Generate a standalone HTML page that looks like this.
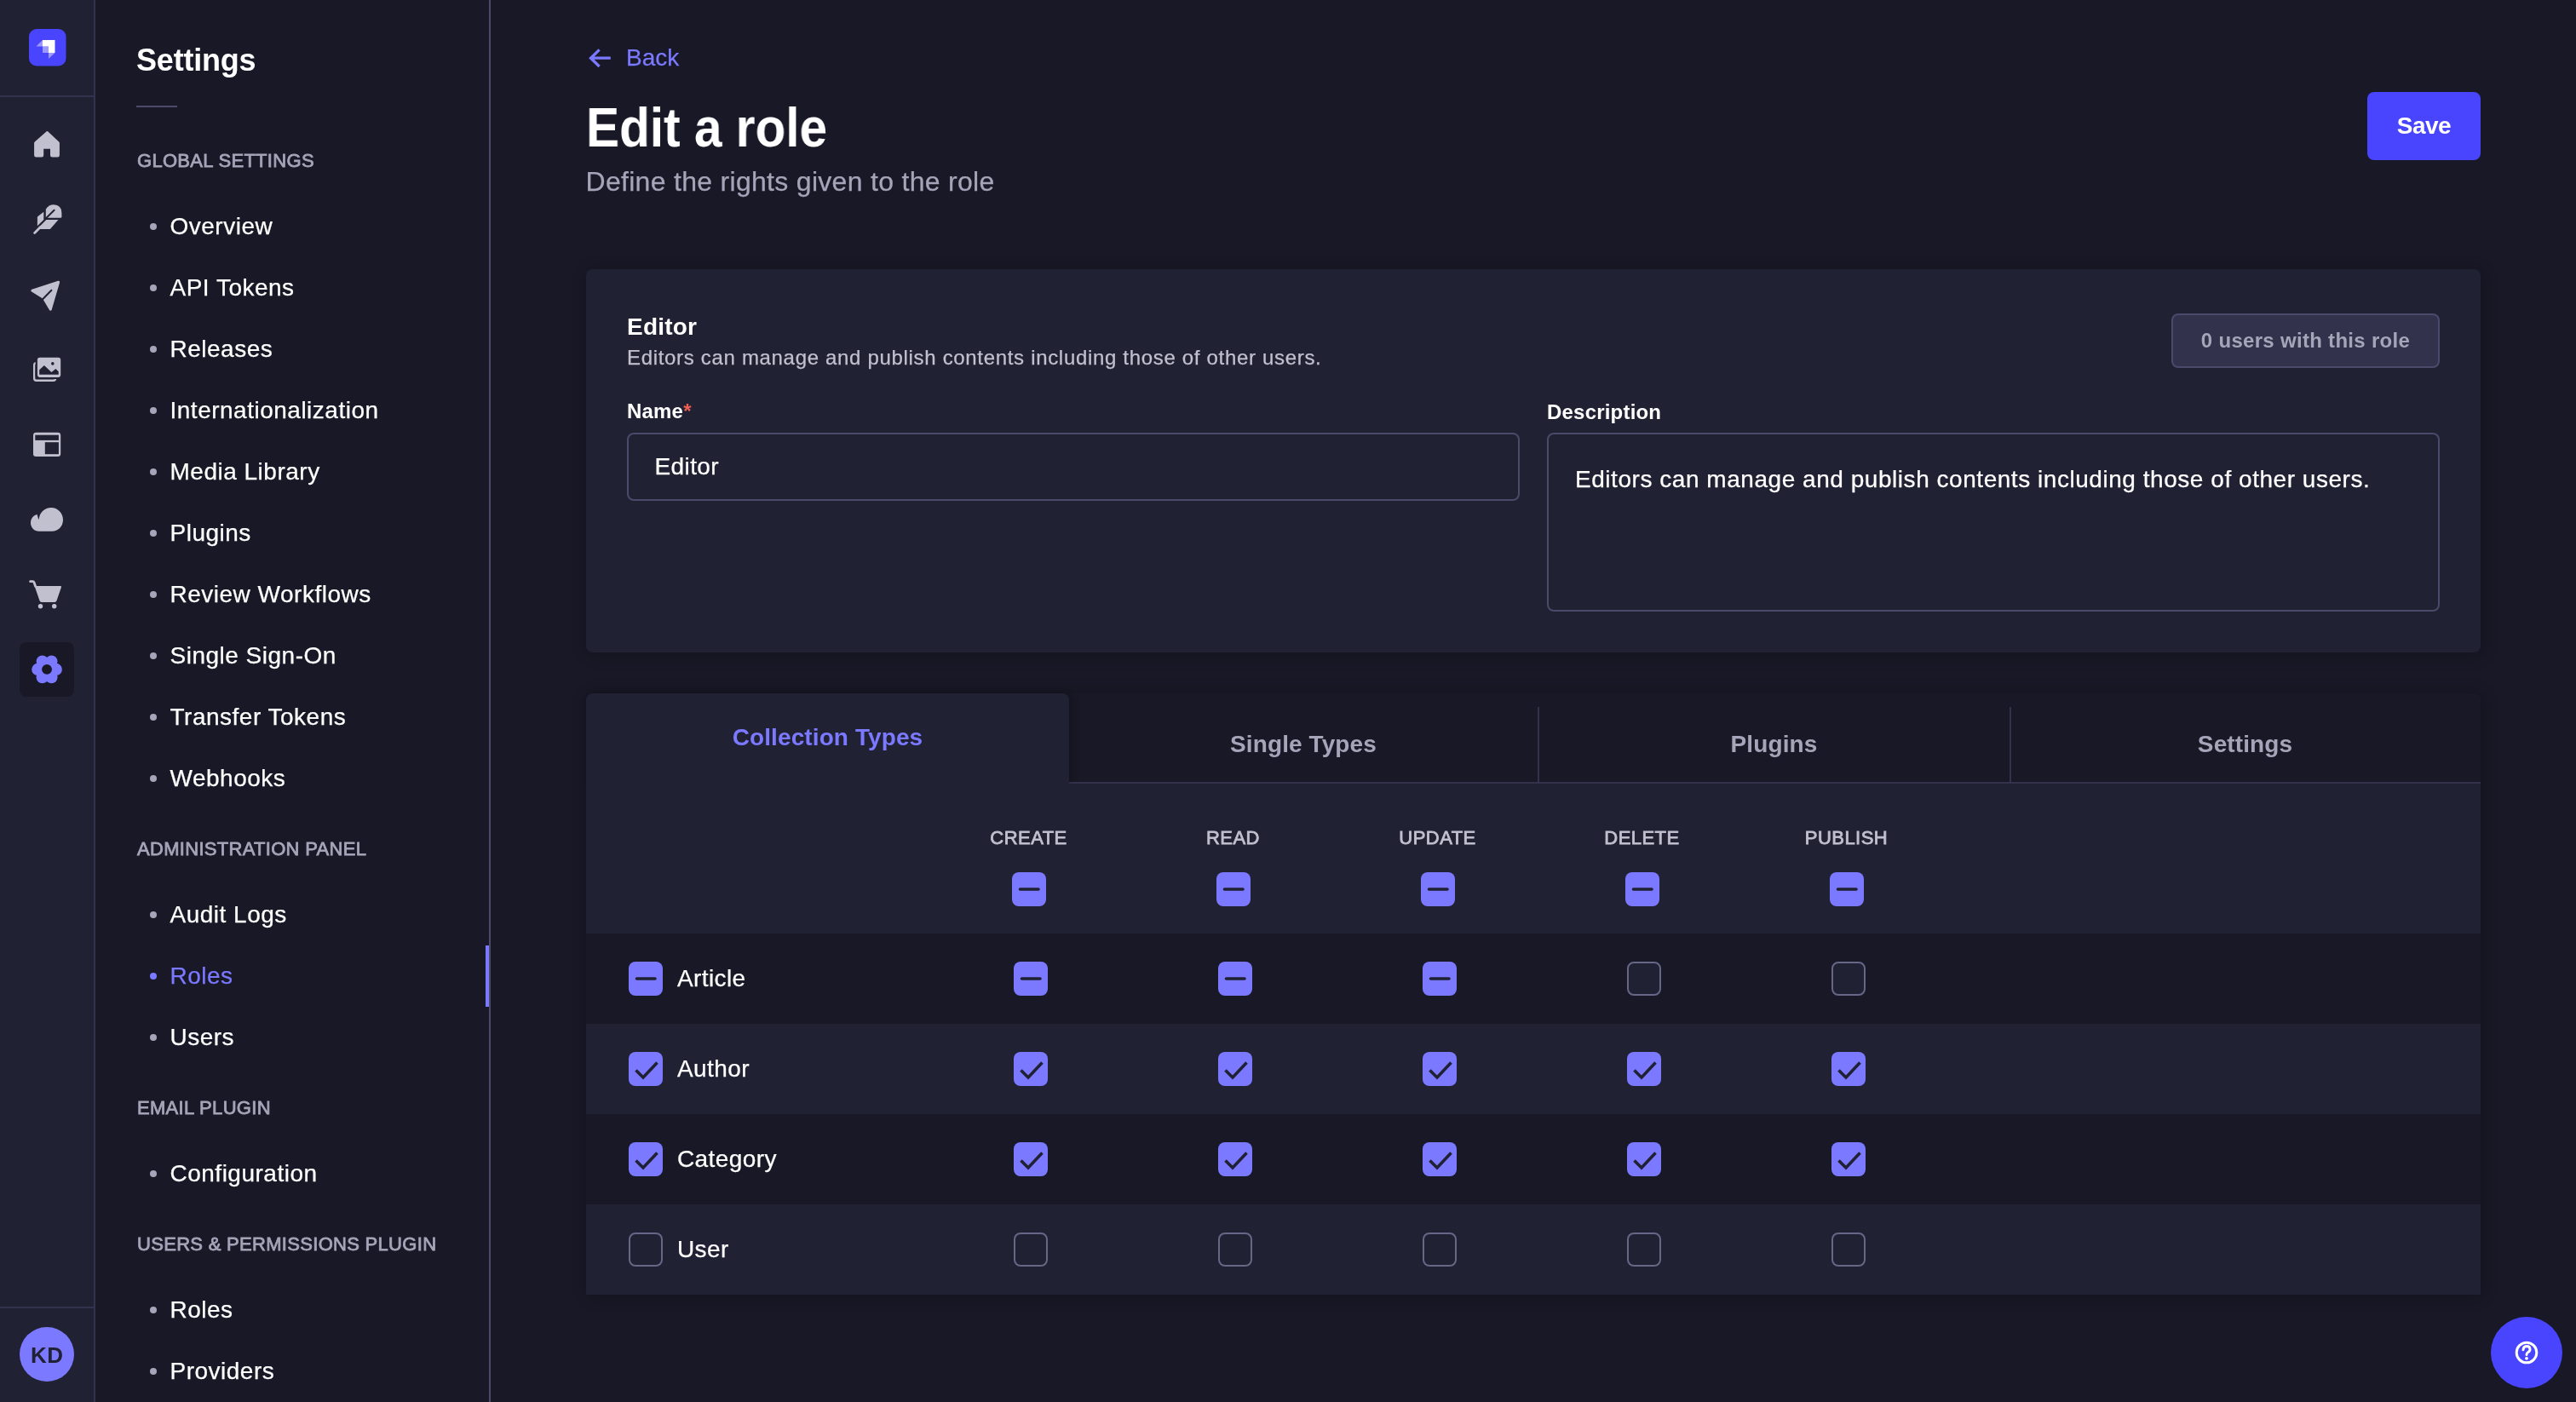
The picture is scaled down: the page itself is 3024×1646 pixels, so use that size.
<!DOCTYPE html>
<html><head><meta charset="utf-8"><title>Edit a role</title>
<style>
html,body{margin:0;padding:0;}
body{width:3024px;height:1646px;overflow:hidden;position:relative;background:#181826;font-family:"Liberation Sans",sans-serif;}
#root{position:absolute;left:0;top:0;width:3024px;height:1646px;will-change:transform;}
#root>div{position:absolute;}
svg{display:block;}
@media (max-width:2000px){body{width:1512px;height:823px;} #root{zoom:0.5;}}
</style></head><body>
<div id="root">
<div style="left:0px;top:0px;width:110px;height:1646px;background:#212134"></div>
<div style="left:110px;top:0px;width:2px;height:1646px;background:#32324d"></div>
<div style="left:0px;top:112px;width:110px;height:2px;background:#32324d"></div>
<div style="left:0px;top:1534px;width:110px;height:2px;background:#32324d"></div>
<svg style="position:absolute;left:34px;top:34px;" width="44" height="44" viewBox="0 0 44 44"><rect x="0" y="0" width="43.5" height="43.5" rx="9" fill="#4945ff"/><path d="M16 13 H30.5 V28 H23 V20.5 H16 Z" fill="#fff"/><path d="M16 20.5 H23 V28 H16 Z" fill="#fff" fill-opacity="0.45"/><path d="M8.4 20.5 L16 13 V20.5 Z" fill="#fff" fill-opacity="0.45"/><path d="M23 28 H30.5 L23 35 Z" fill="#fff" fill-opacity="0.45"/></svg>
<svg style="position:absolute;left:33px;top:148px;" width="44" height="44" viewBox="0 0 44 44"><path d="M22.4 6.2 Q22.9 5.9 23.4 6.4 L36.2 18.4 Q36.9 19.1 36.9 20 V34.3 Q36.9 36.6 34.6 36.6 H28.3 Q26 36.6 26 34.3 V26.7 H18.2 V34.3 Q18.2 36.6 15.9 36.6 H9.4 Q7.1 36.6 7.1 34.3 V20 Q7.1 19.1 7.8 18.4 L21.4 6.4 Q21.9 5.9 22.4 6.2 Z" fill="#c0c0cf"/></svg>
<svg style="position:absolute;left:34px;top:236px;" width="44" height="44" viewBox="0 0 44 44"><path d="M19.8 19.8 V9.6 Q23.5 4.2 29 4.2 Q38.4 4.6 38.4 14 V18.3 Q38.4 19.8 36.9 19.8 Z" fill="#c0c0cf"/><path d="M17.3 12.7 V21.9 L9.9 29.2 V19.2 Q9.9 18.5 10.5 18 Z" fill="#c0c0cf"/><path d="M20.3 22 H34.5 L25.3 32.4 Q24.8 33 24 33 H12.6 L11.4 31 Z" fill="#c0c0cf"/><path d="M6.6 37.4 L13.5 30.5" stroke="#c0c0cf" stroke-width="2.8" stroke-linecap="round"/><path d="M29.6 10.7 L19.2 21.1" stroke="#212134" stroke-width="2" stroke-linecap="round"/><path d="M19.8 19.8 H20.5 V22 H19.8 Z" fill="#212134"/></svg>
<svg style="position:absolute;left:32px;top:325px;" width="44" height="44" viewBox="0 0 44 44"><path d="M36.6 6.3 L5.9 16.2 L18 23.6 L20 26 L27.3 38.2 Z" fill="#c0c0cf" stroke="#c0c0cf" stroke-width="3" stroke-linejoin="round"/><path d="M18.4 26 L28.4 15.8" stroke="#212134" stroke-width="2" stroke-linecap="round"/></svg>
<svg style="position:absolute;left:34px;top:412px;" width="44" height="44" viewBox="0 0 44 44"><rect x="6.15" y="14.15" width="25" height="20.6" rx="2.5" fill="none" stroke="#c0c0cf" stroke-width="2.3"/><rect x="7.7" y="5.6" width="31.7" height="27.5" rx="4" fill="#212134"/><rect x="9.9" y="7.8" width="27.3" height="23.1" rx="2.8" fill="#c0c0cf"/><path d="M12.2 22.3 L17.9 17.1 L26.4 25.1 L31.4 21 L34.7 24.2 V27.8 H12.2 Z" fill="#212134"/><circle cx="27.8" cy="14.9" r="1.8" fill="#212134"/></svg>
<svg style="position:absolute;left:34px;top:500px;" width="44" height="44" viewBox="0 0 44 44"><rect x="5" y="7.8" width="32.2" height="28.1" rx="3.2" fill="#c0c0cf"/><rect x="7.3" y="10.7" width="27.6" height="6.2" fill="#212134"/><rect x="18.8" y="19.2" width="16.1" height="14" fill="#212134"/></svg>
<svg style="position:absolute;left:33px;top:588px;" width="44" height="44" viewBox="0 0 44 44"><path d="M10.6 15.9 C6 17 3 21 3 26 C3 31.5 7.5 35.8 12.5 35.8 H28 C35.2 35.8 41 30 41 22.2 C41 14.4 34.8 8 27 8 C20.5 8 15 12.5 13.3 18.5 L12.3 22.3 Z" fill="#c0c0cf"/></svg>
<svg style="position:absolute;left:32px;top:676px;" width="44" height="44" viewBox="0 0 44 44"><path d="M3.6 6.7 H6.3 Q7.6 6.7 8.1 8 L9.6 12.2" fill="none" stroke="#c0c0cf" stroke-width="2.8" stroke-linecap="round" stroke-linejoin="round"/><path d="M8.6 11.9 H39 Q40.3 11.9 40 13.2 L34.6 29 Q34 30.9 32 30.9 H17 Q15 30.9 14.4 29 Z" fill="#c0c0cf"/><circle cx="15.5" cy="35.8" r="2.7" fill="#c0c0cf"/><circle cx="31.7" cy="35.8" r="2.7" fill="#c0c0cf"/></svg>
<div style="left:23px;top:754px;width:64px;height:64px;background:#181826;border-radius:8px"></div>
<svg style="position:absolute;left:33px;top:764px;" width="44" height="44" viewBox="0 0 44 44"><circle cx="32.85" cy="21.90" r="7.05" fill="#7b79ff"/><circle cx="27.45" cy="31.25" r="7.05" fill="#7b79ff"/><circle cx="16.65" cy="31.25" r="7.05" fill="#7b79ff"/><circle cx="11.25" cy="21.90" r="7.05" fill="#7b79ff"/><circle cx="16.65" cy="12.55" r="7.05" fill="#7b79ff"/><circle cx="27.45" cy="12.55" r="7.05" fill="#7b79ff"/><circle cx="22.05" cy="21.9" r="11" fill="#7b79ff"/><circle cx="22.05" cy="21.85" r="5.95" fill="#181826"/></svg>
<div style="left:23px;top:1558px;width:64px;height:64px;background:#7b79ff;border-radius:50%"></div>
<div style="top:1577.99px;font-size:26px;line-height:26px;font-weight:700;color:#212134;letter-spacing:0.5px;left:23.30px;width:64px;text-align:center;white-space:nowrap;">KD</div>
<div style="left:112px;top:0px;width:462px;height:1646px;background:#181826"></div>
<div style="left:574px;top:0px;width:2px;height:1646px;background:#4a4a6a"></div>
<div style="top:52.53px;font-size:36px;line-height:36px;font-weight:700;color:#ffffff;letter-spacing:-0.2px;left:160px;white-space:nowrap;">Settings</div>
<div style="left:160px;top:124px;width:48px;height:2px;background:#4a4a6a"></div>
<div style="top:178.38px;font-size:22px;line-height:22px;font-weight:400;color:#a5a5ba;letter-spacing:0.3px;left:161px;white-space:nowrap;-webkit-text-stroke:0.8px #a5a5ba;">GLOBAL SETTINGS</div>
<div style="left:176px;top:262px;width:8px;height:8px;background:#a5a5ba;border-radius:50%"></div>
<div style="top:252.30px;font-size:28px;line-height:28px;font-weight:400;color:#ffffff;letter-spacing:0.5px;left:199.5px;white-space:nowrap;-webkit-text-stroke:0.25px #ffffff;">Overview</div>
<div style="left:176px;top:334px;width:8px;height:8px;background:#a5a5ba;border-radius:50%"></div>
<div style="top:324.30px;font-size:28px;line-height:28px;font-weight:400;color:#ffffff;letter-spacing:0.5px;left:199.5px;white-space:nowrap;-webkit-text-stroke:0.25px #ffffff;">API Tokens</div>
<div style="left:176px;top:406px;width:8px;height:8px;background:#a5a5ba;border-radius:50%"></div>
<div style="top:396.30px;font-size:28px;line-height:28px;font-weight:400;color:#ffffff;letter-spacing:0.5px;left:199.5px;white-space:nowrap;-webkit-text-stroke:0.25px #ffffff;">Releases</div>
<div style="left:176px;top:478px;width:8px;height:8px;background:#a5a5ba;border-radius:50%"></div>
<div style="top:468.30px;font-size:28px;line-height:28px;font-weight:400;color:#ffffff;letter-spacing:0.5px;left:199.5px;white-space:nowrap;-webkit-text-stroke:0.25px #ffffff;">Internationalization</div>
<div style="left:176px;top:550px;width:8px;height:8px;background:#a5a5ba;border-radius:50%"></div>
<div style="top:540.30px;font-size:28px;line-height:28px;font-weight:400;color:#ffffff;letter-spacing:0.5px;left:199.5px;white-space:nowrap;-webkit-text-stroke:0.25px #ffffff;">Media Library</div>
<div style="left:176px;top:622px;width:8px;height:8px;background:#a5a5ba;border-radius:50%"></div>
<div style="top:612.30px;font-size:28px;line-height:28px;font-weight:400;color:#ffffff;letter-spacing:0.5px;left:199.5px;white-space:nowrap;-webkit-text-stroke:0.25px #ffffff;">Plugins</div>
<div style="left:176px;top:694px;width:8px;height:8px;background:#a5a5ba;border-radius:50%"></div>
<div style="top:684.30px;font-size:28px;line-height:28px;font-weight:400;color:#ffffff;letter-spacing:0.5px;left:199.5px;white-space:nowrap;-webkit-text-stroke:0.25px #ffffff;">Review Workflows</div>
<div style="left:176px;top:766px;width:8px;height:8px;background:#a5a5ba;border-radius:50%"></div>
<div style="top:756.30px;font-size:28px;line-height:28px;font-weight:400;color:#ffffff;letter-spacing:0.5px;left:199.5px;white-space:nowrap;-webkit-text-stroke:0.25px #ffffff;">Single Sign-On</div>
<div style="left:176px;top:838px;width:8px;height:8px;background:#a5a5ba;border-radius:50%"></div>
<div style="top:828.30px;font-size:28px;line-height:28px;font-weight:400;color:#ffffff;letter-spacing:0.5px;left:199.5px;white-space:nowrap;-webkit-text-stroke:0.25px #ffffff;">Transfer Tokens</div>
<div style="left:176px;top:910px;width:8px;height:8px;background:#a5a5ba;border-radius:50%"></div>
<div style="top:900.30px;font-size:28px;line-height:28px;font-weight:400;color:#ffffff;letter-spacing:0.5px;left:199.5px;white-space:nowrap;-webkit-text-stroke:0.25px #ffffff;">Webhooks</div>
<div style="top:986.38px;font-size:22px;line-height:22px;font-weight:400;color:#a5a5ba;letter-spacing:0.3px;left:161px;white-space:nowrap;-webkit-text-stroke:0.8px #a5a5ba;">ADMINISTRATION PANEL</div>
<div style="left:176px;top:1070px;width:8px;height:8px;background:#a5a5ba;border-radius:50%"></div>
<div style="top:1060.30px;font-size:28px;line-height:28px;font-weight:400;color:#ffffff;letter-spacing:0.5px;left:199.5px;white-space:nowrap;-webkit-text-stroke:0.25px #ffffff;">Audit Logs</div>
<div style="left:176px;top:1142px;width:8px;height:8px;background:#7b79ff;border-radius:50%"></div>
<div style="top:1132.30px;font-size:28px;line-height:28px;font-weight:400;color:#7b79ff;letter-spacing:0.5px;left:199.5px;white-space:nowrap;-webkit-text-stroke:0.25px #7b79ff;">Roles</div>
<div style="left:570px;top:1110px;width:4px;height:72px;background:#7b79ff"></div>
<div style="left:176px;top:1214px;width:8px;height:8px;background:#a5a5ba;border-radius:50%"></div>
<div style="top:1204.30px;font-size:28px;line-height:28px;font-weight:400;color:#ffffff;letter-spacing:0.5px;left:199.5px;white-space:nowrap;-webkit-text-stroke:0.25px #ffffff;">Users</div>
<div style="top:1290.38px;font-size:22px;line-height:22px;font-weight:400;color:#a5a5ba;letter-spacing:0.3px;left:161px;white-space:nowrap;-webkit-text-stroke:0.8px #a5a5ba;">EMAIL PLUGIN</div>
<div style="left:176px;top:1374px;width:8px;height:8px;background:#a5a5ba;border-radius:50%"></div>
<div style="top:1364.30px;font-size:28px;line-height:28px;font-weight:400;color:#ffffff;letter-spacing:0.5px;left:199.5px;white-space:nowrap;-webkit-text-stroke:0.25px #ffffff;">Configuration</div>
<div style="top:1450.38px;font-size:22px;line-height:22px;font-weight:400;color:#a5a5ba;letter-spacing:0.3px;left:161px;white-space:nowrap;-webkit-text-stroke:0.8px #a5a5ba;">USERS &amp; PERMISSIONS PLUGIN</div>
<div style="left:176px;top:1534px;width:8px;height:8px;background:#a5a5ba;border-radius:50%"></div>
<div style="top:1524.30px;font-size:28px;line-height:28px;font-weight:400;color:#ffffff;letter-spacing:0.5px;left:199.5px;white-space:nowrap;-webkit-text-stroke:0.25px #ffffff;">Roles</div>
<div style="left:176px;top:1606px;width:8px;height:8px;background:#a5a5ba;border-radius:50%"></div>
<div style="top:1596.30px;font-size:28px;line-height:28px;font-weight:400;color:#ffffff;letter-spacing:0.5px;left:199.5px;white-space:nowrap;-webkit-text-stroke:0.25px #ffffff;">Providers</div>
<svg style="position:absolute;left:689px;top:56px;" width="30" height="24" viewBox="0 0 30 24"><path d="M27.8 12.2 H5 M14.6 2.4 L4.5 12.2 L14.6 22" fill="none" stroke="#7b79ff" stroke-width="3.3" stroke-linecap="butt" stroke-linejoin="miter"/></svg>
<div style="top:54.30px;font-size:28px;line-height:28px;font-weight:400;color:#7b79ff;left:735px;white-space:nowrap;-webkit-text-stroke:0.25px #7b79ff;">Back</div>
<div style="top:118.32px;font-size:64px;line-height:64px;font-weight:700;color:#ffffff;left:688px;white-space:nowrap;transform:scaleX(0.915);transform-origin:0 0;">Edit a role</div>
<div style="top:196.91px;font-size:32px;line-height:32px;font-weight:400;color:#a5a5ba;letter-spacing:0.3px;left:687.5px;white-space:nowrap;-webkit-text-stroke:0.25px #a5a5ba;">Define the rights given to the role</div>
<div style="left:2779px;top:108px;width:133px;height:80px;background:#4945ff;border-radius:8px"></div>
<div style="top:134.30px;font-size:28px;line-height:28px;font-weight:700;color:#ffffff;letter-spacing:-0.5px;left:2779.00px;width:133px;text-align:center;white-space:nowrap;">Save</div>
<div style="left:688px;top:316px;width:2224px;height:450px;background:#212134;border-radius:8px;box-shadow:2px 2px 20px rgba(0,0,0,0.2);"></div>
<div style="top:370.30px;font-size:28px;line-height:28px;font-weight:700;color:#ffffff;letter-spacing:0.2px;left:736px;white-space:nowrap;">Editor</div>
<div style="top:407.68px;font-size:24px;line-height:24px;font-weight:400;color:#c0c0cf;letter-spacing:0.68px;left:736px;white-space:nowrap;-webkit-text-stroke:0.25px #c0c0cf;">Editors can manage and publish contents including those of other users.</div>
<div style="left:2549px;top:368px;width:315px;height:64px;background:#32324d;border:2px solid #4a4a6a;border-radius:8px;box-sizing:border-box"></div>
<div style="top:387.68px;font-size:24px;line-height:24px;font-weight:700;color:#a5a5ba;letter-spacing:0.3px;left:2549.00px;width:315px;text-align:center;white-space:nowrap;">0 users with this role</div>
<div style="top:470.68px;font-size:24px;line-height:24px;font-weight:700;color:#ffffff;letter-spacing:0.2px;left:736px;white-space:nowrap;">Name<span style="color:#ee5e52">*</span></div>
<div style="left:736px;top:508px;width:1048px;height:80px;border:2px solid #4a4a6a;border-radius:8px;box-sizing:border-box;background:#212134"></div>
<div style="top:534.30px;font-size:28px;line-height:28px;font-weight:400;color:#ffffff;letter-spacing:0.4px;left:768.5px;white-space:nowrap;-webkit-text-stroke:0.25px #ffffff;">Editor</div>
<div style="top:471.68px;font-size:24px;line-height:24px;font-weight:700;color:#ffffff;letter-spacing:0.2px;left:1816px;white-space:nowrap;">Description</div>
<div style="left:1816px;top:508px;width:1048px;height:210px;border:2px solid #4a4a6a;border-radius:8px;box-sizing:border-box;background:#212134"></div>
<div style="top:549.30px;font-size:28px;line-height:28px;font-weight:400;color:#ffffff;letter-spacing:0.54px;left:1849px;white-space:nowrap;-webkit-text-stroke:0.25px #ffffff;">Editors can manage and publish contents including those of other users.</div>
<div style="left:688px;top:814px;width:2224px;height:706px;background:#212134;border-radius:8px;box-shadow:2px 2px 20px rgba(0,0,0,0.2);"></div>
<div style="left:688px;top:814px;width:2224px;height:106px;background:#181826;border-radius:8px 8px 0 0"></div>
<div style="left:1255px;top:918px;width:1657px;height:2px;background:#32324d"></div>
<div style="left:1805px;top:830px;width:2px;height:88px;background:#32324d"></div>
<div style="left:2359px;top:830px;width:2px;height:88px;background:#32324d"></div>
<div style="left:688px;top:814px;width:567px;height:106px;background:#212134;border-radius:8px 8px 0 0;box-shadow:2px 0 10px rgba(0,0,0,0.25)"></div>
<div style="left:688px;top:860px;width:567px;height:60px;background:#212134"></div>
<div style="left:688px;top:920px;width:2224px;height:30px;background:#212134"></div>
<div style="top:852.30px;font-size:28px;line-height:28px;font-weight:700;color:#7b79ff;letter-spacing:0.1px;left:688.50px;width:566px;text-align:center;white-space:nowrap;">Collection Types</div>
<div style="top:860.30px;font-size:28px;line-height:28px;font-weight:700;color:#a5a5ba;letter-spacing:0.1px;left:1254.00px;width:552px;text-align:center;white-space:nowrap;">Single Types</div>
<div style="top:860.30px;font-size:28px;line-height:28px;font-weight:700;color:#a5a5ba;letter-spacing:0.1px;left:1806.50px;width:552px;text-align:center;white-space:nowrap;">Plugins</div>
<div style="top:860.30px;font-size:28px;line-height:28px;font-weight:700;color:#a5a5ba;letter-spacing:0.1px;left:2359.50px;width:552px;text-align:center;white-space:nowrap;">Settings</div>
<div style="top:973.38px;font-size:22px;line-height:22px;font-weight:400;color:#c0c0cf;letter-spacing:0.45px;left:1107.50px;width:200px;text-align:center;white-space:nowrap;-webkit-text-stroke:0.8px #c0c0cf;">CREATE</div>
<div style="top:973.38px;font-size:22px;line-height:22px;font-weight:400;color:#c0c0cf;letter-spacing:0.45px;left:1347.50px;width:200px;text-align:center;white-space:nowrap;-webkit-text-stroke:0.8px #c0c0cf;">READ</div>
<div style="top:973.38px;font-size:22px;line-height:22px;font-weight:400;color:#c0c0cf;letter-spacing:0.45px;left:1587.50px;width:200px;text-align:center;white-space:nowrap;-webkit-text-stroke:0.8px #c0c0cf;">UPDATE</div>
<div style="top:973.38px;font-size:22px;line-height:22px;font-weight:400;color:#c0c0cf;letter-spacing:0.45px;left:1827.50px;width:200px;text-align:center;white-space:nowrap;-webkit-text-stroke:0.8px #c0c0cf;">DELETE</div>
<div style="top:973.38px;font-size:22px;line-height:22px;font-weight:400;color:#c0c0cf;letter-spacing:0.45px;left:2067.50px;width:200px;text-align:center;white-space:nowrap;-webkit-text-stroke:0.8px #c0c0cf;">PUBLISH</div>
<svg style="position:absolute;left:1187.5px;top:1024px;" width="40" height="40" viewBox="0 0 40 40"><rect x="0" y="0" width="40" height="40" rx="8" fill="#7b79ff"/><path d="M9.5 20 H31" fill="none" stroke="#212134" stroke-width="3.6" stroke-linecap="round"/></svg>
<svg style="position:absolute;left:1427.5px;top:1024px;" width="40" height="40" viewBox="0 0 40 40"><rect x="0" y="0" width="40" height="40" rx="8" fill="#7b79ff"/><path d="M9.5 20 H31" fill="none" stroke="#212134" stroke-width="3.6" stroke-linecap="round"/></svg>
<svg style="position:absolute;left:1667.5px;top:1024px;" width="40" height="40" viewBox="0 0 40 40"><rect x="0" y="0" width="40" height="40" rx="8" fill="#7b79ff"/><path d="M9.5 20 H31" fill="none" stroke="#212134" stroke-width="3.6" stroke-linecap="round"/></svg>
<svg style="position:absolute;left:1907.5px;top:1024px;" width="40" height="40" viewBox="0 0 40 40"><rect x="0" y="0" width="40" height="40" rx="8" fill="#7b79ff"/><path d="M9.5 20 H31" fill="none" stroke="#212134" stroke-width="3.6" stroke-linecap="round"/></svg>
<svg style="position:absolute;left:2147.5px;top:1024px;" width="40" height="40" viewBox="0 0 40 40"><rect x="0" y="0" width="40" height="40" rx="8" fill="#7b79ff"/><path d="M9.5 20 H31" fill="none" stroke="#212134" stroke-width="3.6" stroke-linecap="round"/></svg>
<div style="left:688px;top:1096px;width:2224px;height:106px;background:#181826"></div>
<svg style="position:absolute;left:738px;top:1129px;" width="40" height="40" viewBox="0 0 40 40"><rect x="0" y="0" width="40" height="40" rx="8" fill="#7b79ff"/><path d="M9.5 20 H31" fill="none" stroke="#212134" stroke-width="3.6" stroke-linecap="round"/></svg>
<div style="top:1135.30px;font-size:28px;line-height:28px;font-weight:400;color:#ffffff;letter-spacing:0.4px;left:795px;white-space:nowrap;-webkit-text-stroke:0.25px #ffffff;">Article</div>
<svg style="position:absolute;left:1189.5px;top:1129px;" width="40" height="40" viewBox="0 0 40 40"><rect x="0" y="0" width="40" height="40" rx="8" fill="#7b79ff"/><path d="M9.5 20 H31" fill="none" stroke="#212134" stroke-width="3.6" stroke-linecap="round"/></svg>
<svg style="position:absolute;left:1429.5px;top:1129px;" width="40" height="40" viewBox="0 0 40 40"><rect x="0" y="0" width="40" height="40" rx="8" fill="#7b79ff"/><path d="M9.5 20 H31" fill="none" stroke="#212134" stroke-width="3.6" stroke-linecap="round"/></svg>
<svg style="position:absolute;left:1669.5px;top:1129px;" width="40" height="40" viewBox="0 0 40 40"><rect x="0" y="0" width="40" height="40" rx="8" fill="#7b79ff"/><path d="M9.5 20 H31" fill="none" stroke="#212134" stroke-width="3.6" stroke-linecap="round"/></svg>
<svg style="position:absolute;left:1909.5px;top:1129px;" width="40" height="40" viewBox="0 0 40 40"><rect x="1" y="1" width="38" height="38" rx="7" fill="#212134" stroke="#666687" stroke-width="2"/></svg>
<svg style="position:absolute;left:2149.5px;top:1129px;" width="40" height="40" viewBox="0 0 40 40"><rect x="1" y="1" width="38" height="38" rx="7" fill="#212134" stroke="#666687" stroke-width="2"/></svg>
<div style="left:688px;top:1202px;width:2224px;height:106px;background:#212134"></div>
<svg style="position:absolute;left:738px;top:1235px;" width="40" height="40" viewBox="0 0 40 40"><rect x="0" y="0" width="40" height="40" rx="8" fill="#7b79ff"/><path d="M8.5 21.5 L17 30 L33.5 12.5" fill="none" stroke="#212134" stroke-width="3.6"/></svg>
<div style="top:1241.30px;font-size:28px;line-height:28px;font-weight:400;color:#ffffff;letter-spacing:0.4px;left:795px;white-space:nowrap;-webkit-text-stroke:0.25px #ffffff;">Author</div>
<svg style="position:absolute;left:1189.5px;top:1235px;" width="40" height="40" viewBox="0 0 40 40"><rect x="0" y="0" width="40" height="40" rx="8" fill="#7b79ff"/><path d="M8.5 21.5 L17 30 L33.5 12.5" fill="none" stroke="#212134" stroke-width="3.6"/></svg>
<svg style="position:absolute;left:1429.5px;top:1235px;" width="40" height="40" viewBox="0 0 40 40"><rect x="0" y="0" width="40" height="40" rx="8" fill="#7b79ff"/><path d="M8.5 21.5 L17 30 L33.5 12.5" fill="none" stroke="#212134" stroke-width="3.6"/></svg>
<svg style="position:absolute;left:1669.5px;top:1235px;" width="40" height="40" viewBox="0 0 40 40"><rect x="0" y="0" width="40" height="40" rx="8" fill="#7b79ff"/><path d="M8.5 21.5 L17 30 L33.5 12.5" fill="none" stroke="#212134" stroke-width="3.6"/></svg>
<svg style="position:absolute;left:1909.5px;top:1235px;" width="40" height="40" viewBox="0 0 40 40"><rect x="0" y="0" width="40" height="40" rx="8" fill="#7b79ff"/><path d="M8.5 21.5 L17 30 L33.5 12.5" fill="none" stroke="#212134" stroke-width="3.6"/></svg>
<svg style="position:absolute;left:2149.5px;top:1235px;" width="40" height="40" viewBox="0 0 40 40"><rect x="0" y="0" width="40" height="40" rx="8" fill="#7b79ff"/><path d="M8.5 21.5 L17 30 L33.5 12.5" fill="none" stroke="#212134" stroke-width="3.6"/></svg>
<div style="left:688px;top:1308px;width:2224px;height:106px;background:#181826"></div>
<svg style="position:absolute;left:738px;top:1341px;" width="40" height="40" viewBox="0 0 40 40"><rect x="0" y="0" width="40" height="40" rx="8" fill="#7b79ff"/><path d="M8.5 21.5 L17 30 L33.5 12.5" fill="none" stroke="#212134" stroke-width="3.6"/></svg>
<div style="top:1347.30px;font-size:28px;line-height:28px;font-weight:400;color:#ffffff;letter-spacing:0.4px;left:795px;white-space:nowrap;-webkit-text-stroke:0.25px #ffffff;">Category</div>
<svg style="position:absolute;left:1189.5px;top:1341px;" width="40" height="40" viewBox="0 0 40 40"><rect x="0" y="0" width="40" height="40" rx="8" fill="#7b79ff"/><path d="M8.5 21.5 L17 30 L33.5 12.5" fill="none" stroke="#212134" stroke-width="3.6"/></svg>
<svg style="position:absolute;left:1429.5px;top:1341px;" width="40" height="40" viewBox="0 0 40 40"><rect x="0" y="0" width="40" height="40" rx="8" fill="#7b79ff"/><path d="M8.5 21.5 L17 30 L33.5 12.5" fill="none" stroke="#212134" stroke-width="3.6"/></svg>
<svg style="position:absolute;left:1669.5px;top:1341px;" width="40" height="40" viewBox="0 0 40 40"><rect x="0" y="0" width="40" height="40" rx="8" fill="#7b79ff"/><path d="M8.5 21.5 L17 30 L33.5 12.5" fill="none" stroke="#212134" stroke-width="3.6"/></svg>
<svg style="position:absolute;left:1909.5px;top:1341px;" width="40" height="40" viewBox="0 0 40 40"><rect x="0" y="0" width="40" height="40" rx="8" fill="#7b79ff"/><path d="M8.5 21.5 L17 30 L33.5 12.5" fill="none" stroke="#212134" stroke-width="3.6"/></svg>
<svg style="position:absolute;left:2149.5px;top:1341px;" width="40" height="40" viewBox="0 0 40 40"><rect x="0" y="0" width="40" height="40" rx="8" fill="#7b79ff"/><path d="M8.5 21.5 L17 30 L33.5 12.5" fill="none" stroke="#212134" stroke-width="3.6"/></svg>
<div style="left:688px;top:1414px;width:2224px;height:106px;background:#212134"></div>
<svg style="position:absolute;left:738px;top:1447px;" width="40" height="40" viewBox="0 0 40 40"><rect x="1" y="1" width="38" height="38" rx="7" fill="#212134" stroke="#666687" stroke-width="2"/></svg>
<div style="top:1453.30px;font-size:28px;line-height:28px;font-weight:400;color:#ffffff;letter-spacing:0.4px;left:795px;white-space:nowrap;-webkit-text-stroke:0.25px #ffffff;">User</div>
<svg style="position:absolute;left:1189.5px;top:1447px;" width="40" height="40" viewBox="0 0 40 40"><rect x="1" y="1" width="38" height="38" rx="7" fill="#212134" stroke="#666687" stroke-width="2"/></svg>
<svg style="position:absolute;left:1429.5px;top:1447px;" width="40" height="40" viewBox="0 0 40 40"><rect x="1" y="1" width="38" height="38" rx="7" fill="#212134" stroke="#666687" stroke-width="2"/></svg>
<svg style="position:absolute;left:1669.5px;top:1447px;" width="40" height="40" viewBox="0 0 40 40"><rect x="1" y="1" width="38" height="38" rx="7" fill="#212134" stroke="#666687" stroke-width="2"/></svg>
<svg style="position:absolute;left:1909.5px;top:1447px;" width="40" height="40" viewBox="0 0 40 40"><rect x="1" y="1" width="38" height="38" rx="7" fill="#212134" stroke="#666687" stroke-width="2"/></svg>
<svg style="position:absolute;left:2149.5px;top:1447px;" width="40" height="40" viewBox="0 0 40 40"><rect x="1" y="1" width="38" height="38" rx="7" fill="#212134" stroke="#666687" stroke-width="2"/></svg>
<div style="left:2924px;top:1546px;width:84px;height:84px;background:#4945ff;border-radius:50%"></div>
<svg style="position:absolute;left:2950px;top:1572px;" width="32" height="32" viewBox="0 0 32 32"><circle cx="16" cy="16" r="11.8" fill="none" stroke="#fff" stroke-width="3"/><path d="M12 12.8 Q12.2 8.8 16 8.6 Q20 8.6 20 12.3 Q20 14.6 17.5 15.7 Q16 16.5 16 18.5" fill="none" stroke="#fff" stroke-width="3" stroke-linecap="round"/><circle cx="16" cy="22.8" r="1.9" fill="#fff"/></svg>
</div>
</body></html>
